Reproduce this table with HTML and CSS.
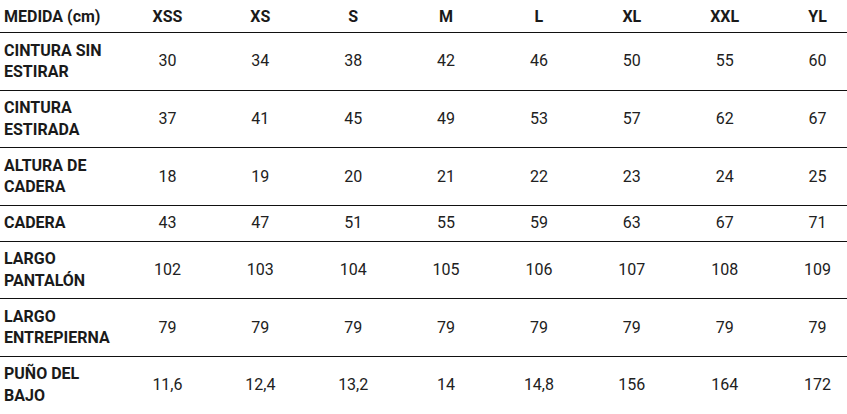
FILE: index.html
```html
<!DOCTYPE html>
<html lang="es">
<head>
<meta charset="utf-8">
<title>Tabla de medidas</title>
<link rel="stylesheet" href="styles.css">
</head>
<body>
<div class="wrap">
<table class="sizes">
  <colgroup>
    <col class="c-label">
    <col class="c-size"><col class="c-size"><col class="c-size"><col class="c-size">
    <col class="c-size"><col class="c-size"><col class="c-size"><col class="c-size">
  </colgroup>
  <thead>
    <tr>
      <th class="label">MEDIDA (cm)</th>
      <th>XSS</th><th>XS</th><th>S</th><th>M</th><th>L</th><th>XL</th><th>XXL</th><th>YL</th>
    </tr>
  </thead>
  <tbody>
    <tr><th class="label">CINTURA SIN ESTIRAR</th><td>30</td><td>34</td><td>38</td><td>42</td><td>46</td><td>50</td><td>55</td><td>60</td></tr>
    <tr><th class="label">CINTURA ESTIRADA</th><td>37</td><td>41</td><td>45</td><td>49</td><td>53</td><td>57</td><td>62</td><td>67</td></tr>
    <tr><th class="label">ALTURA DE CADERA</th><td>18</td><td>19</td><td>20</td><td>21</td><td>22</td><td>23</td><td>24</td><td>25</td></tr>
    <tr><th class="label">CADERA</th><td>43</td><td>47</td><td>51</td><td>55</td><td>59</td><td>63</td><td>67</td><td>71</td></tr>
    <tr><th class="label">LARGO PANTALÓN</th><td>102</td><td>103</td><td>104</td><td>105</td><td>106</td><td>107</td><td>108</td><td>109</td></tr>
    <tr><th class="label">LARGO ENTREPIERNA</th><td>79</td><td>79</td><td>79</td><td>79</td><td>79</td><td>79</td><td>79</td><td>79</td></tr>
    <tr><th class="label">PUÑO DEL BAJO</th><td>11,6</td><td>12,4</td><td>13,2</td><td>14</td><td>14,8</td><td>156</td><td>164</td><td>172</td></tr>
  </tbody>
</table>
</div>
</body>
</html>
```

FILE: styles.css
```css
html, body {
  margin: 0;
  padding: 0;
  background: #ffffff;
}
.wrap {
  width: 847px;
  overflow: hidden;
}
.sizes {
  width: 864px;
  table-layout: fixed;
  border-collapse: collapse;
  font-family: Roboto, "Liberation Sans", Arial, sans-serif;
  font-size: 16px;
  line-height: 21.6px;
  color: #212121;
}
.c-label { width: 121px; }
.c-size { width: 92.875px; }
.sizes th,
.sizes td {
  padding: 6.7px 4px;
  text-align: center;
  vertical-align: middle;
  border-bottom: 1px solid #111111;
}
.sizes th {
  font-weight: 700;
  color: #1a1a1a;
}
.sizes th.label {
  text-align: left;
  padding-left: 4px;
  padding-right: 4px;
}
.sizes thead th {
  padding-top: 6px;
  padding-bottom: 4.4px;
}
.sizes tbody tr:last-child th,
.sizes tbody tr:last-child td {
  border-bottom: none;
}
```
